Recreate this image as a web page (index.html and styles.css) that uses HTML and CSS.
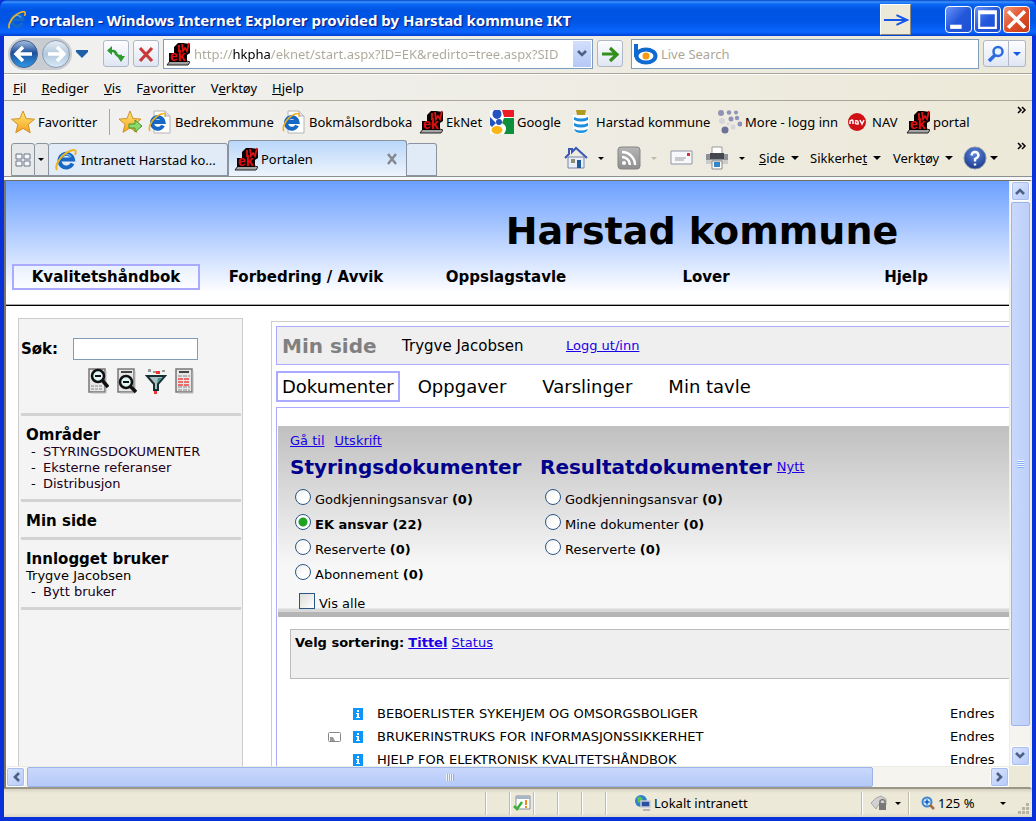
FILE: index.html
```html
<!DOCTYPE html>
<html lang="no">
<head>
<meta charset="utf-8">
<title>Portalen</title>
<link rel="stylesheet" href="styles.css">
</head>
<body>
<svg class="defs" aria-hidden="true">
  <defs>
    <linearGradient id="g-blue" x1="0" y1="0" x2="0" y2="1"><stop offset="0" stop-color="#a9c3e2"/><stop offset=".45" stop-color="#1c4f9c"/><stop offset="1" stop-color="#2f9ae8"/></linearGradient>
    <linearGradient id="g-pale" x1="0" y1="0" x2="0" y2="1"><stop offset="0" stop-color="#e6edf5"/><stop offset=".5" stop-color="#b3c8de"/><stop offset="1" stop-color="#d8eaf8"/></linearGradient>
    <linearGradient id="g-star" x1="0" y1="0" x2="0" y2="1"><stop offset="0" stop-color="#ffe97a"/><stop offset="1" stop-color="#f6a01c"/></linearGradient>
    <linearGradient id="g-grey" x1="0" y1="0" x2="0" y2="1"><stop offset="0" stop-color="#b5b5b5"/><stop offset="1" stop-color="#8e8e8e"/></linearGradient>
    <radialGradient id="g-help" cx=".5" cy=".3" r=".8"><stop offset="0" stop-color="#5b86e0"/><stop offset="1" stop-color="#12307f"/></radialGradient>
    <symbol id="ie" viewBox="0 0 24 24">
      <path d="M18.500 15.500A6.800 6.800 0 1 1 19 11.500H6" fill="none" stroke="#1768c4" stroke-width="4"/>
      <path d="M17 9A6 6 0 0 0 7 9" fill="none" stroke="#58b4f0" stroke-width="1.500"/>
      <path d="M3 22C0 17 8 6 16 3c5-2 7-1 5 4" fill="none" stroke="#efb321" stroke-width="2"/>
    </symbol>
    <symbol id="ie-page" viewBox="0 0 24 24">
      <path d="M6 1h11l5 5v17H6z" fill="#fff" stroke="#b4b4b4"/><path d="M17 1v5h5" fill="#ddd" stroke="#b4b4b4"/>
      <path d="M15 15.500A5.800 5.800 0 1 1 15.500 12H4" fill="none" stroke="#1768c4" stroke-width="4"/>
      <path d="M2 21C-1 16 6 7 13 4c4-1 5-1 4 3" fill="none" stroke="#efb321" stroke-width="1.600"/>
    </symbol>
    <symbol id="ek" viewBox="0 0 24 24">
      <path d="M4 19h17l3 1-2 3H1z" fill="#a4a4a4" stroke="#222"/>
      <path d="M3 11h5V5l4-4h5l7 1v9l-3 2v7H3z" fill="#0a0000"/>
      <path d="M13 3v7M16 2l1 7 2-3 2 3 2-8" fill="none" stroke="#d81414" stroke-width="1.800"/>
      <text x="4" y="19" font-family="Liberation Sans" font-size="14" font-weight="700" fill="#e01010">ek</text>
    </symbol>
    <symbol id="star" viewBox="0 0 24 24"><path d="M12 1l3.200 7.600 8.300.6-6.300 5.400 2 8.200-7.200-4.400-7.200 4.400 2-8.200L.5 9.200l8.300-.6z" fill="url(#g-star)" stroke="#d0922a"/></symbol>
    <symbol id="star-add" viewBox="0 0 24 24"><path d="M11 1l3 7.500 8 .6-6 5.200 2 8L11 18l-7 4.300 2-8L0 9.100l8-.6z" fill="url(#g-star)" stroke="#d0922a"/><path d="M10 14h6v-4l7 6-7 6v-4h-6z" fill="#8fd96a" stroke="#3f9a33"/></symbol>
    <symbol id="caret" viewBox="0 0 8 4"><path d="M0 0h8L4 4z" fill="currentColor"/></symbol>
    <symbol id="chev" viewBox="0 0 10 8"><path d="M1 1l4 4 4-4" fill="none" stroke="#4d6185" stroke-width="2.600"/></symbol>
    <symbol id="info" viewBox="0 0 10 12"><path d="M0 0h10v12H0z" fill="#0c96fb"/><path d="M4 2h2v2H4zM3 5h3v4h1v1H3V9h1V6H3z" fill="#fff"/></symbol>
    <symbol id="sheet" viewBox="0 0 22 26"><path d="M2 1h16v23H2z" fill="#e6e6e6" stroke="#777" stroke-width="1.500"/><path d="M19 3v22H4" fill="none" stroke="#bbb"/></symbol>
  </defs>
</svg>

<div class="window">
  <header class="titlebar">
    <svg class="i20" aria-hidden="true"><use href="#ie"/></svg>
    <h1 class="window-title">Portalen - Windows Internet Explorer provided by Harstad kommune IKT</h1>
    <button class="arrow-btn" aria-label="Flytt vindu"><svg viewBox="0 0 28 20"><path d="M2 10h24M15 5l11 5-11 5" fill="none" stroke="#1457e6" stroke-width="2"/></svg></button>
    <div class="win-btns">
      <button class="win-btn" aria-label="Minimer"><svg viewBox="0 0 24 24"><path d="M4 17h11v4H4z" fill="#fff"/></svg></button>
      <button class="win-btn" aria-label="Maksimer"><svg viewBox="0 0 24 24"><path d="M3 3h18v18H3zM5 7h14v12H5z" fill="#fff" fill-rule="evenodd"/></svg></button>
      <button class="win-btn win-close" aria-label="Lukk"><svg viewBox="0 0 24 24"><path d="M4 4l16 16M20 4L4 20" stroke="#fff" stroke-width="3.500"/></svg></button>
    </div>
  </header>

  <div class="chrome">
    <div class="navrow">
      <div class="backfwd">
        <button class="round" aria-label="Tilbake"><svg viewBox="0 0 30 30"><circle cx="15" cy="15" r="13.500" fill="url(#g-blue)" stroke="#44618c"/><path d="M23 15H8M14 8l-7 7 7 7" fill="none" stroke="#fff" stroke-width="3.500"/></svg></button>
        <button class="round" aria-label="Frem"><svg viewBox="0 0 30 30"><circle cx="15" cy="15" r="13.500" fill="url(#g-pale)" stroke="#8a9bb0"/><path d="M7 15h15M16 8l7 7-7 7" fill="none" stroke="#fff" stroke-width="3.500"/></svg></button>
      </div>
      <button class="plain history" aria-label="Siste sider"><svg viewBox="0 0 12 8"><path d="M0 0h12v2L6 8 0 2z" fill="#1f5fa8"/></svg></button>
      <button class="tool" aria-label="Oppdater"><svg viewBox="0 0 24 24"><path d="M6 9h3q3 0 3 4M12 10q0 4 3 4h3" fill="none" stroke="#2f9a2f" stroke-width="2.400"/><path d="M8 4v9L3 8.500zM13 14h8l-4 6z" fill="#2f9a2f"/></svg></button>
      <button class="tool" aria-label="Stopp"><svg viewBox="0 0 24 24"><path d="M6 6l12 13M18 6L6 19" stroke="#c93a3a" stroke-width="3.200"/></svg></button>
      <div class="field address">
        <svg class="i24" aria-hidden="true"><use href="#ek"/></svg>
        <input class="url" type="text" aria-label="Adresse" value="http://hkpha/eknet/start.aspx?ID=EK&amp;redirto=tree.aspx?SID">
        <button class="drop" aria-label="Vis adresser"><svg viewBox="0 0 10 8"><use href="#chev"/></svg></button>
      </div>
      <button class="tool" aria-label="Gå til"><svg viewBox="0 0 24 24"><path d="M4 12h13M12 6l7 6.500-7 6.500" fill="none" stroke="#34901c" stroke-width="3.200"/></svg></button>
      <div class="field search">
        <svg class="i24" viewBox="0 0 24 24" aria-hidden="true"><path d="M2 2v13" stroke="#0f6bd0" stroke-width="4"/><ellipse cx="12" cy="14" rx="9.500" ry="6.500" fill="#fff" stroke="#0f6bd0" stroke-width="4"/><circle cx="12" cy="14" r="3.500" fill="#f59a14"/></svg>
        <input class="live" type="text" aria-label="Søk på nettet" placeholder="Live Search">
      </div>
      <div class="searchbtns">
        <button class="tool" aria-label="Søk"><svg viewBox="0 0 24 24"><circle cx="14" cy="9.500" r="4.500" fill="#eaf3ff" stroke="#2d6be0" stroke-width="2.500"/><path d="M11 13l-6 6" stroke="#2d6be0" stroke-width="3.500"/></svg></button>
        <button class="tool narrow" aria-label="Søkevalg"><svg class="caret blue"><use href="#caret"/></svg></button>
      </div>
    </div>

    <nav class="menubar">
      <button class="plain"><u>F</u>il</button><button class="plain"><u>R</u>ediger</button><button class="plain"><u>V</u>is</button><button class="plain">F<u>a</u>voritter</button><button class="plain">V<u>e</u>rktøy</button><button class="plain"><u>H</u>jelp</button>
    </nav>

    <div class="favbar">
      <button class="plain fav"><svg class="i24"><use href="#star"/></svg>Favoritter</button>
      <span class="sep"></span>
      <button class="plain fav" aria-label="Legg til favoritt"><svg class="i24"><use href="#star-add"/></svg></button>
      <a class="fav" href="#"><svg class="i24"><use href="#ie-page"/></svg>Bedrekommune</a>
      <a class="fav" href="#"><svg class="i24"><use href="#ie-page"/></svg>Bokmålsordboka</a>
      <a class="fav" href="#"><svg class="i24"><use href="#ek"/></svg>EkNet</a>
      <a class="fav" href="#"><svg class="i24" viewBox="0 0 24 24"><path d="M0 0h24v24H0z" fill="#fff"/><path d="M12 0h12v7H14z" fill="#ee1b24"/><path d="M14 8h10v16H14c3-5 3-8-2-11z" fill="#0f8f3e"/><ellipse cx="7" cy="4" rx="4.500" ry="5" fill="#2253c0"/><path d="M0 7l6 6-4 4-2-2z" fill="#2253c0"/><ellipse cx="7" cy="20" rx="5.500" ry="4" fill="#fbb615"/><circle cx="9" cy="12" r="3" fill="#2253c0"/></svg>Google</a>
      <a class="fav" href="#"><svg class="i24" viewBox="0 0 24 24"><path d="M4 5h16v14q-1 4-8 5-7-1-8-5z" fill="#fff"/><path d="M7 0h10l-1 5H8z" fill="#b09a20"/><path d="M5 7q7 3 14 0v3q-7 3-14 0zM5 13q7 3 14 0v3q-7 3-14 0zM5 19q7 3 14 0-1 4-7 4-6 0-7-4z" fill="#1d8fdc"/></svg>Harstad kommune</a>
      <a class="fav" href="#"><svg class="i24" viewBox="0 0 24 24"><g fill="#9092b8"><circle cx="3" cy="3" r="3"/><circle cx="11" cy="2.500" r="2.300"/><circle cx="18" cy="2.500" r="2"/><circle cx="13" cy="9" r="2.500"/><circle cx="19" cy="8" r="2.200"/><circle cx="22" cy="14" r="2.500"/><circle cx="7" cy="20" r="3.500" fill="#6e7198"/></g><g fill="#d5d5da"><circle cx="4" cy="11" r="3"/><circle cx="15" cy="17" r="2.500"/><circle cx="10" cy="14" r="1.500"/></g></svg>More - logg inn</a>
      <a class="fav" href="#"><svg class="i24" viewBox="0 0 24 24"><circle cx="12" cy="12" r="9" fill="#cf1116"/><path d="M5 14v-3q3-2 3 0v3m2-3q4-1 3 3-4 0-2-2M15 10l2 4 2-4" fill="none" stroke="#fff" stroke-width="1.500"/></svg>NAV</a>
      <a class="fav" href="#"><svg class="i24"><use href="#ek"/></svg>portal</a>
      <button class="plain more" aria-label="Flere favoritter"><svg viewBox="0 0 10 8"><path d="M1 1l3 3-3 3M5 1l3 3-3 3" fill="none" stroke="#000" stroke-width="1.500"/></svg></button>
    </div>

    <div class="tabrow">
      <div class="tabs">
        <button class="tab quick" aria-label="Hurtigfaner"><svg class="i20" viewBox="0 0 20 20"><path d="M3 4h6v5H3zM11 4h6v5h-6zM3 11h6v5H3zM11 11h6v5h-6z" fill="#f4f6fa" stroke="#6d7587"/></svg></button>
        <button class="tab quickdrop" aria-label="Faneliste"><svg class="caret small"><use href="#caret"/></svg></button>
        <button class="tab wide"><svg class="i24"><use href="#ie"/></svg>Intranett Harstad ko...</button>
        <div class="tab wide active"><svg class="i24"><use href="#ek"/></svg><span class="tabname">Portalen</span><button class="plain closetab" aria-label="Lukk fane"><svg viewBox="0 0 12 12"><path d="M2 1l8 10M10 1L2 11" stroke="#85888e" stroke-width="2.500"/></svg></button></div>
        <button class="tab newtab" aria-label="Ny fane"></button>
      </div>
      <div class="commands">
        <button class="plain cmd home" aria-label="Startside"><svg class="i24" viewBox="0 0 24 24"><path d="M4 11h16v11H4z" fill="#e9eef8" stroke="#7684a8"/><path d="M1 12L5 8V3h3v3l4-4 11 10" fill="none" stroke="#3d57b4" stroke-width="2"/><path d="M13 14h4v8h-4z" fill="#1f5a9a"/><path d="M7 13h4v4H7z" fill="#8b8f70"/></svg><svg class="caret small"><use href="#caret"/></svg></button>
        <button class="plain cmd rss" aria-label="Feeder"><svg class="i24" viewBox="0 0 24 24"><rect x="1" y="1" width="22" height="22" rx="3" fill="url(#g-grey)" stroke="#858585"/><circle cx="7" cy="17" r="2" fill="#fff"/><path d="M5 11a8 8 0 0 1 8 8M5 6a13 13 0 0 1 13 13" fill="none" stroke="#fff" stroke-width="2.500"/></svg><svg class="caret small faded"><use href="#caret"/></svg></button>
        <button class="plain cmd mail" aria-label="Les e-post"><svg class="i24" viewBox="0 0 24 24"><path d="M1 5h21v13H1z" fill="#f7f8fc" stroke="#8f95a8"/><path d="M17 7h3v3h-3z" fill="#d43434"/><path d="M5 12h11M5 14h9" stroke="#999"/></svg></button>
        <button class="plain cmd print" aria-label="Skriv ut"><svg class="i24" viewBox="0 0 24 24"><path d="M7 1h10v8H7z" fill="#fff" stroke="#999"/><path d="M1 8h22v9H1z" fill="#8d9096"/><path d="M5 7h14v6H5z" fill="#44474d"/><path d="M1 14h22v4H1z" fill="#ccc"/><path d="M7 15h10v8H7z" fill="#fff" stroke="#888"/><path d="M9 16h6v5H9z" fill="#2f86c8"/></svg><svg class="caret small"><use href="#caret"/></svg></button>
        <button class="plain cmd side"><span><u>S</u>ide</span><svg class="caret"><use href="#caret"/></svg></button>
        <button class="plain cmd sikk"><span>Sikkerhe<u>t</u></span><svg class="caret"><use href="#caret"/></svg></button>
        <button class="plain cmd verk"><span>Verk<u>t</u>øy</span><svg class="caret"><use href="#caret"/></svg></button>
        <button class="plain cmd help" aria-label="Hjelp"><svg class="i24" viewBox="0 0 24 24"><circle cx="12" cy="12" r="11" fill="url(#g-help)" stroke="#8b94ac"/><path d="M8.500 9.500Q9 6 12 6t3.500 3.200Q15.500 11 12 13v2.500M12 17.500v2" fill="none" stroke="#fff" stroke-width="2.400"/></svg><svg class="caret"><use href="#caret"/></svg></button>
        <button class="plain more" aria-label="Flere kommandoer"><svg viewBox="0 0 10 8"><path d="M1 1l3 3-3 3M5 1l3 3-3 3" fill="none" stroke="#000" stroke-width="1.500"/></svg></button>
      </div>
    </div>
  </div>

  <div class="viewport">
    <div class="page">
      <div class="banner">
        <h2 class="site-title">Harstad kommune</h2>
        <nav class="mainnav">
          <a class="current" href="#">Kvalitetshåndbok</a><a href="#">Forbedring / Avvik</a><a href="#">Oppslagstavle</a><a href="#">Lover</a><a href="#">Hjelp</a>
        </nav>
      </div>
      <div class="columns">
        <aside class="sidebar">
          <form class="sok">
            <label for="sok">Søk:</label><input id="sok" type="text">
          </form>
          <div class="sok-icons">
            <button class="plain" type="button" aria-label="Søk i dokument"><svg viewBox="0 0 22 26"><use href="#sheet"/><path d="M4 18h12M4 21h12" stroke="#888" stroke-dasharray="3 1"/><circle cx="11" cy="8" r="6" fill="#dff6f6" stroke="#111" stroke-width="2.500"/><path d="M8 8h6" stroke="#111" stroke-width="2"/><path d="M15 12l6 7" stroke="#111" stroke-width="3.500"/></svg></button>
            <button class="plain" type="button" aria-label="Søk i tittel"><svg viewBox="0 0 22 26"><use href="#sheet"/><path d="M5 4h11" stroke="#444" stroke-width="2"/><circle cx="10" cy="14" r="6" fill="#dff6f6" stroke="#111" stroke-width="2.500"/><path d="M7 14h6" stroke="#111" stroke-width="2"/><path d="M14 18l6 6" stroke="#111" stroke-width="3.500"/></svg></button>
            <button class="plain" type="button" aria-label="Filtrer"><svg viewBox="0 0 22 26"><path d="M2 8h18l-7 8v6H9v-6z" fill="#aebfc0" stroke="#152f33" stroke-width="2"/><path d="M13 10h4l-5 6z" fill="#3f9094"/><path d="M3 1h3v3H3zM8 3h3v2H8zM17 2h3v2h-3z" fill="#999"/><path d="M11 3h4v3h-4zM9 23h3v3H9z" fill="#e33"/></svg></button>
            <button class="plain" type="button" aria-label="Dokumentliste"><svg viewBox="0 0 22 26"><use href="#sheet"/><path d="M5 4h10" stroke="#444" stroke-width="2"/><path d="M4 8h12M4 19h12M4 22h12" stroke="#888" stroke-dasharray="4 1"/><path d="M4 11h12M4 14h12M4 17h12" stroke="#e44" stroke-width="1.500" stroke-dasharray="5 1"/></svg></button>
          </div>
          <section class="block"><h3>Områder</h3><ul><li><a href="#">STYRINGSDOKUMENTER</a></li><li><a href="#">Eksterne referanser</a></li><li><a href="#">Distribusjon</a></li></ul></section>
          <section class="block"><h3>Min side</h3></section>
          <section class="block"><h3>Innlogget bruker</h3><p>Trygve Jacobsen</p><ul><li><a href="#">Bytt bruker</a></li></ul></section>
          <div class="block"></div>
        </aside>
        <main class="main">
          <div class="userbar"><h2>Min side</h2><span class="user">Trygve Jacobsen</span><a href="#">Logg ut/inn</a></div>
          <nav class="subtabs"><a class="current" href="#">Dokumenter</a><a href="#">Oppgaver</a><a href="#">Varslinger</a><a href="#">Min tavle</a></nav>
          <div class="content">
            <form class="panel">
              <div class="panel-links"><a href="#">Gå til</a><a href="#">Utskrift</a></div>
              <div class="groups">
                <div class="group">
                  <h3>Styringsdokumenter</h3>
                  <label><input type="radio" name="dok"><span>Godkjenningsansvar <b>(0)</b></span></label>
                  <label><input type="radio" name="dok" checked><span><b>EK ansvar (22)</b></span></label>
                  <label><input type="radio" name="dok"><span>Reserverte <b>(0)</b></span></label>
                  <label><input type="radio" name="dok"><span>Abonnement <b>(0)</b></span></label>
                </div>
                <div class="group">
                  <h3>Resultatdokumenter <a href="#">Nytt</a></h3>
                  <label><input type="radio" name="dok"><span>Godkjenningsansvar <b>(0)</b></span></label>
                  <label><input type="radio" name="dok"><span>Mine dokumenter <b>(0)</b></span></label>
                  <label><input type="radio" name="dok"><span>Reserverte <b>(0)</b></span></label>
                </div>
              </div>
              <label class="visalle"><input type="checkbox"><span>Vis alle</span></label>
            </form>
            <div class="sort"><b>Velg sortering:</b> <a class="on" href="#">Tittel</a> <a href="#">Status</a></div>
            <table class="docs">
              <tr><td class="c1"></td><td class="c2"><svg><use href="#info"/></svg></td><td>BEBOERLISTER SYKEHJEM OG OMSORGSBOLIGER</td><td class="c4">Endres</td></tr>
              <tr><td class="c1"><svg viewBox="0 0 13 10"><rect x=".5" y=".5" width="12" height="9" rx="1" fill="#fff" stroke="#888"/><path d="M2 5h3l2 4H2z" fill="#999"/></svg></td><td class="c2"><svg><use href="#info"/></svg></td><td>BRUKERINSTRUKS FOR INFORMASJONSSIKKERHET</td><td class="c4">Endres</td></tr>
              <tr><td class="c1"></td><td class="c2"><svg><use href="#info"/></svg></td><td>HJELP FOR ELEKTRONISK KVALITETSHÅNDBOK</td><td class="c4">Endres</td></tr>
            </table>
          </div>
        </main>
      </div>
    </div>
    <div class="vscroll">
      <button class="sbtn" aria-label="Rull opp"><svg class="up" viewBox="0 0 10 8"><use href="#chev"/></svg></button>
      <div class="vthumb"><span class="vgrip"></span></div>
      <button class="sbtn" aria-label="Rull ned"><svg viewBox="0 0 10 8"><use href="#chev"/></svg></button>
    </div>
    <div class="hscroll">
      <button class="sbtn" aria-label="Rull til venstre"><svg class="left" viewBox="0 0 10 8"><use href="#chev"/></svg></button>
      <div class="hthumb"><span class="hgrip"></span></div>
      <span class="htrack"></span>
      <button class="sbtn" aria-label="Rull til høyre"><svg class="right" viewBox="0 0 10 8"><use href="#chev"/></svg></button>
    </div>
  </div>

  <footer class="status">
    <span class="cell grow"></span><span class="cell"></span>
    <span class="cell"><svg class="i18" viewBox="0 0 18 18"><path d="M3 2h14v13H3z" fill="#fff" stroke="#8790a0"/><path d="M3 2h14v3H3z" fill="#a8b4c8"/><path d="M13 6v5M13 12v2" stroke="#f08a1c" stroke-width="2"/><path d="M1 12l3 3 5-7" fill="none" stroke="#3fae3a" stroke-width="2.500"/></svg></span>
    <span class="cell"></span><span class="cell"></span><span class="cell"></span>
    <span class="zone"><svg class="i18" viewBox="0 0 18 18"><circle cx="7" cy="7" r="6" fill="#2f7fd0"/><path d="M3 4q3-3 5 0T4 9z" fill="#5ec24b"/><path d="M7 7h9v6H7z" fill="#2a4fa0" stroke="#c8ccd4" stroke-width="1.500"/><path d="M9 15h7v2H9z" fill="#b5b5b5"/></svg>Lokalt intranett</span>
    <button class="plain prot" aria-label="Beskyttet modus"><svg class="i18" viewBox="0 0 18 18"><path d="M1 9l5-5 5-2 5 3v6H8l-2 4z" fill="#d2d2d2" stroke="#a8a8a8"/><path d="M9 9h7v7H9z" fill="#777"/><path d="M10 9V7q2.500-3 5 0v2" fill="none" stroke="#777" stroke-width="1.500"/></svg><svg class="caret small"><use href="#caret"/></svg></button>
    <button class="plain zoomlvl"><svg class="i14" viewBox="0 0 14 14"><circle cx="6" cy="6" r="4.500" fill="#cfe6fb" stroke="#3d86cd" stroke-width="2"/><path d="M3.500 6h5M6 3.500v5" stroke="#1457c0" stroke-width="1.500"/><path d="M9 9l4 4" stroke="#a76a3c" stroke-width="2.500"/></svg><span>125 %</span><svg class="caret small"><use href="#caret"/></svg></button>
    <svg class="grip" viewBox="0 0 12 12" aria-hidden="true"><path d="M8 0h3v3H8zM4 4h3v3H4zM8 4h3v3H8zM0 8h3v3H0zM4 8h3v3H4zM8 8h3v3H8z" fill="#b8b4a2"/></svg>
  </footer>
</div>
</body>
</html>
```
FILE: styles.css
```css
* { box-sizing: border-box; }
body { margin: 0; background: #0831d9; color: #000; font: 13px "DejaVu Sans", Verdana, sans-serif; }
h1, h2, h3, p, ul { margin: 0; padding: 0; }
ul { list-style: none; }
button { font: inherit; color: inherit; }
svg { display: block; flex: none; }
.defs { position: absolute; width: 0; height: 0; }
.i24 { width: 24px; height: 24px; }
.i20 { width: 20px; height: 20px; }
.i18 { width: 18px; height: 18px; }
.i14 { width: 14px; height: 14px; }
.caret { width: 8px; height: 4px; }
.caret.small { width: 6px; height: 3px; }
.caret.faded { color: #bdbaa9; }
.caret.blue { color: #1457e6; }
.plain { display: flex; align-items: center; padding: 0; border: 0; background: none; white-space: nowrap; }

.window { display: flex; flex-direction: column; height: 100vh; }
.titlebar { display: flex; align-items: center; flex: none; height: 36px; padding: 3px 6px 0 7px; border-radius: 8px 8px 0 0; background: linear-gradient(#0645c8, #3c95ff 2px, #0a66f4 4px, #0054e3 10px, #0055e5 22px, #0a66ff 32px, #003fd0 36px); }
.window-title { flex: 1; margin-left: 3px; color: #fff; font: bold 15px "Noto Sans", sans-serif; text-shadow: 1px 1px 1px #0a1883; white-space: nowrap; }
.arrow-btn { width: 31px; height: 31px; margin-right: 34px; padding: 1px; border: 1px solid; border-color: #fff #8c8a7c #8c8a7c #fff; background: #ece9d8; }
.arrow-btn svg { width: 27px; height: 20px; }
.win-btns { display: flex; gap: 2px; }
.win-btn { width: 27px; height: 27px; padding: 0; border: 1px solid #fff; border-radius: 4px; background: linear-gradient(135deg, #6d93f5, #2358dc 50%, #1f4fd0); }
.win-btn svg { width: 25px; height: 25px; }
.win-close { background: linear-gradient(135deg, #f09a7c, #e0502b 50%, #c23a14); }

.chrome { flex: none; margin: 0 4px; border-bottom: 3px solid #f6f7f8; background: linear-gradient(90deg, #f1f1f1, #ece9d8); font-family: "Noto Sans", Tahoma, sans-serif; }
.navrow { display: flex; align-items: center; height: 38px; padding: 0 6px 2px 4px; border-bottom: 1px solid #aaa79a; }
.backfwd { display: flex; gap: 2px; padding: 1px; border-radius: 17px; background: #c9ccd0; }
.round { width: 30px; height: 30px; padding: 0; border: 0; background: none; }
.history { margin: 0 15px 0 4px; }
.history svg { width: 12px; height: 8px; }
.tool { display: flex; align-items: center; justify-content: center; flex: none; width: 26px; height: 27px; margin-right: 4px; padding: 0; border: 1px solid #b0b8c8; border-radius: 3px; background: linear-gradient(#fdfdff, #dfe6f3); }
.tool svg:not(.caret) { width: 24px; height: 24px; }
.field { display: flex; align-items: center; min-width: 0; height: 30px; border: 1px solid #7f9db9; background: #fff; }
.field input { flex: 1; min-width: 0; height: 26px; padding: 0; border: 0; outline: 0; background: none; font: inherit; }
.address { flex: 431; margin-right: 4px; padding: 1px 1px 1px 2px; }
.address .url { margin: 0 3px 0 4px; background: linear-gradient(90deg, #aca899 39px, #000 39px, #000 77px, #aca899 77px); background-clip: text; -webkit-background-clip: text; color: transparent; }
.drop { width: 18px; height: 26px; padding: 4px; border: 0; background: linear-gradient(#d3dffc, #b5c8f5); }
.drop svg { width: 10px; height: 8px; }
.search { flex: 347; margin: 0 4px; padding: 1px 2px; }
.search .live { margin-left: 3px; }
.live::placeholder { color: #aca899; }
.searchbtns { display: flex; }
.searchbtns .tool { margin: 0; border-radius: 3px 0 0 3px; }
.searchbtns .narrow { width: 17px; border-left: 0; border-radius: 0 3px 3px 0; }
.menubar { display: flex; align-items: center; gap: 15px; height: 27px; padding-left: 9px; border-top: 1px solid #fff; border-bottom: 1px solid #aaa79a; }
.favbar { display: grid; grid-template-columns: 98px 10px 29px 134px 137px 71px 79px 149px 127px 61px 1fr auto; align-items: center; height: 39px; padding: 3px 5px 0 7px; }
.fav { display: flex; align-items: center; gap: 3px; color: #000; text-decoration: none; white-space: nowrap; }
.sep { width: 1px; height: 26px; background: #aaa79a; }
.more { align-self: flex-start; padding-top: 2px; }
.more svg { width: 10px; height: 8px; }
.tabrow { display: flex; justify-content: space-between; height: 37px; padding-left: 7px; border-bottom: 1px solid #8e8f8f; }
.tabs { display: flex; align-items: flex-end; }
.tab { display: flex; align-items: center; height: 33px; padding: 0 5px; border: 1px solid #8c93a0; border-radius: 3px 3px 0 0; background: #e0ebf7; }
.tab + .tab { border-left: 0; }
.quick { width: 24px; padding: 0 1px; background: #e6e8ea; }
.quickdrop { width: 14px; padding: 0 3px; background: #e6e8ea; }
.wide { gap: 3px; width: 179px; }
.tab.active { height: 36px; border-bottom: 0; border-left: 1px solid #8c93a0; background: linear-gradient(#b9d7fa, #eef4fc); }
.tabname { flex: 1; }
.closetab { margin-right: 3px; }
.closetab svg { width: 12px; height: 12px; }
.newtab { width: 30px; }
.commands { display: grid; grid-template-columns: 53px 53px 35px 54px 51px 83px 70px 49px 15px; align-items: center; padding-right: 5px; }
.commands .more { justify-content: flex-end; }
.cmd { gap: 6px; }
.home, .rss, .print { gap: 10px; }
.help { gap: 3px; }

.viewport { display: grid; grid-template: minmax(0, 1fr) 21px / minmax(0, 1fr) 21px; flex: 1; min-height: 0; margin: 0 4px; border-left: 2px solid #7a766a; border-bottom: 2px solid #9a9789; border-right: 2px solid #efece0; background: #ece9d8; border-top: 1px solid #716f64; }
.page { overflow: hidden; background: #fff; }
.banner { height: 125px; padding-top: 25px; border-bottom: 1px solid #000; box-shadow: inset 0 -1px #a8a8a8; background: linear-gradient(#6b9fff, #fff 112px); }
.site-title { width: 1392px; font-size: 38px; line-height: 50px; text-align: center; white-space: nowrap; }
.mainnav { display: grid; grid-template-columns: repeat(5, 200px); margin-top: 8px; font-size: 15px; font-weight: bold; line-height: 22px; }
.mainnav a { margin: 0 6px; border: 2px solid transparent; color: #000; text-align: center; text-decoration: none; white-space: nowrap; }
.mainnav .current { border-color: #aaaaff; background: rgba(255, 255, 255, .4); }
.columns { display: flex; align-items: stretch; height: 700px; padding: 12px 0 0 12px; }
.sidebar { flex: none; width: 225px; margin-right: 28px; padding: 19px 1px 0 2px; border: 1px solid #ccc; background: #f4f4f4; }
.sok { display: flex; align-items: center; font-size: 15px; font-weight: bold; }
.sok label { width: 52px; }
.sok input { width: 125px; height: 22px; border: 1px solid #7f9db9; background: #fff; }
.sok-icons { display: flex; gap: 7px; margin: 8px 0 19px 66px; }
.sok-icons svg { width: 22px; height: 26px; }
.block { padding: 11px 5px 7px; border-top: 3px solid #d3d3d3; line-height: 16px; }
.block h3 { font-size: 15px; line-height: 17px; }
.block li::before { content: "-"; display: inline-block; width: 12px; padding-left: 5px; }
.block li a { color: #200020; text-decoration: none; }
.main { flex: 1; min-width: 0; margin-top: 3px; padding: 4px 0 0 4px; border: 1px solid #ccc; border-right: 0; }
.main a { color: #1a00e8; }
.userbar { display: flex; align-items: center; height: 39px; padding-left: 5px; border: 1px solid #aaaaff; border-right: 0; background: #efefef; }
.userbar h2 { width: 120px; color: #808080; font-size: 20px; }
.user { width: 164px; font-size: 15px; }
.main .subtabs { display: flex; align-items: center; height: 31px; margin: 6px 0 5px; font-size: 18px; }
.main .subtabs a { padding: 0 16px; border: 2px solid transparent; color: #000; line-height: 27px; text-decoration: none; }
.main .subtabs .current { padding: 0 4px; border-color: #aaaaff; }
.content { height: 500px; padding: 18px 0 0 1px; border: 1px solid #aaaaff; border-right: 0; }
.panel { height: 191px; padding: 6px 0 0 12px; border-bottom: 5px solid #b5b5b5; background: linear-gradient(#c0c0c0, #f7f7f7 140px, #f7f7f7 182px, #d8d8d8 183px); }
.panel-links { display: flex; gap: 10px; line-height: 17px; }
.groups { display: grid; grid-template-columns: 250px 1fr; height: 143px; align-items: start; }
.group h3 { display: flex; align-items: center; gap: 5px; height: 24px; margin: 6px 0 5px; color: #00008b; font-size: 20px; line-height: 24px; white-space: nowrap; }
.group h3 a { font-size: 13px; font-weight: normal; }
.group label, .visalle { display: flex; align-items: center; gap: 4px; height: 25px; padding-left: 5px; white-space: nowrap; }
.group label span, .visalle span { padding-top: 5px; }
.panel input { appearance: none; width: 16px; height: 16px; margin: 0; border: 1px solid #2a5687; background: linear-gradient(135deg, #dcdcd7, #fff); }
.panel input[type=radio] { border-radius: 50%; background: linear-gradient(135deg, #eeeeea, #fff 60%); }
.panel input[type=radio]:checked { background: radial-gradient(circle, #21a121 4px, #fff 5px); }
.visalle { padding-left: 9px; height: 18px; }
.sort { height: 50px; margin: 12px 0 23px 12px; padding: 4px; border: 1px solid #bbb; border-right: 0; background: #efefef; line-height: 18px; }
.sort .on { font-weight: bold; }
.docs { width: 100%; border-collapse: collapse; }
.docs td { height: 23px; padding: 0; white-space: nowrap; }
.docs .c1 { width: 75px; padding-left: 50px; }
.docs .c1 svg { width: 13px; height: 10px; }
.docs .c2 { width: 24px; }
.docs .c2 svg { width: 10px; height: 12px; }
.docs .c4 { width: 59px; }

.sbtn { display: flex; align-items: center; justify-content: center; flex: none; width: 19px; height: 20px; padding: 0; border: 1px solid #fff; border-radius: 3px; outline: 1px solid #a9bfee; outline-offset: -2px; background: linear-gradient(135deg, #dce6fe, #b5c9f8); }
.sbtn svg { width: 10px; height: 8px; }
.up { transform: rotate(180deg); }
.left { transform: rotate(90deg); }
.right { transform: rotate(-90deg); }
.vscroll { display: flex; flex-direction: column; align-items: center; background: #f5f4ef; border-left: 1px solid #eeede5; }
.vthumb { display: flex; align-items: center; justify-content: center; flex: 1; width: 19px; margin: 1px 0 20px; border: 1px solid #9cb4e8; border-radius: 2px; background: linear-gradient(90deg, #c9d8fc, #bdd0fa); }
.vgrip { width: 7px; height: 8px; background: repeating-linear-gradient(#eef4fe 0 1px, #8cb0f8 1px 2px); }
.hscroll { display: flex; align-items: center; background: #f5f4ef; border-top: 1px solid #eeede5; }
.hthumb { display: flex; align-items: center; justify-content: center; flex: 845; height: 20px; margin-left: 2px; border: 1px solid #9cb4e8; border-radius: 2px; background: linear-gradient(#c9d8fc, #b5c9f8); }
.hgrip { width: 8px; height: 7px; background: repeating-linear-gradient(90deg, #eef4fe 0 1px, #8cb0f8 1px 2px); }
.htrack { flex: 117; }

.status { display: flex; align-items: center; flex: none; height: 32px; padding: 2px 2px 2px 0; border: solid #0831d9; border-width: 0 4px 4px; background: linear-gradient(#d5d1c0, #ece9d8 4px, #ece9d8 24px, #dcd8c8); font-family: "Noto Sans", Tahoma, sans-serif; }
.cell { display: flex; align-items: center; flex: none; width: 24px; height: 23px; padding-left: 3px; border-right: 1px solid #c0bca9; box-shadow: 1px 0 #fff; }
.cell.grow { flex: 1; }
.zone { display: flex; align-items: center; flex: none; width: 256px; gap: 2px; height: 23px; padding-left: 28px; border-right: 1px solid #c0bca9; box-shadow: 1px 0 #fff; white-space: nowrap; }
.prot { gap: 7px; width: 47px; height: 23px; padding-left: 8px; border-right: 1px solid #c0bca9; box-shadow: 1px 0 #fff; }
.zoomlvl { gap: 3px; width: 109px; padding-left: 12px; }
.zoomlvl span { width: 59px; text-align: left; }
.grip { align-self: flex-end; width: 12px; height: 12px; }
```
